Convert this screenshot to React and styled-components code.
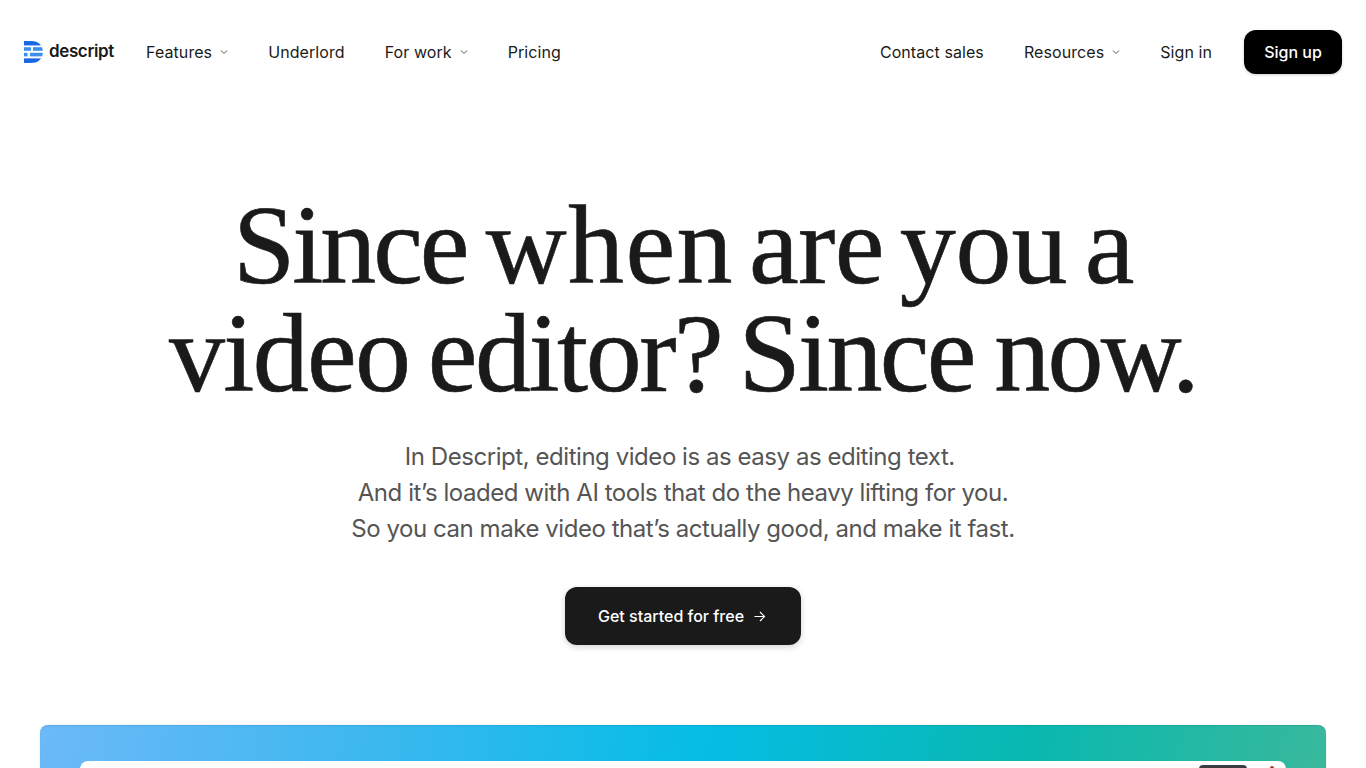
import React from "react";
import styled, { createGlobalStyle } from "styled-components";

const Global = createGlobalStyle`
  html, body { margin: 0; padding: 0; background: #fff; height: 768px; overflow: hidden; }
  * { box-sizing: border-box; }
  body { font-family: Inter, "Liberation Sans", sans-serif; color: #1a1a1a; }
`;

const Page = styled.div`
  width: 1366px;
  height: 768px;
  overflow: hidden;
  display: flex;
  flex-direction: column;
`;

const Nav = styled.nav`
  height: 104px;
  padding: 30px 24px;
  display: flex;
  align-items: center;
  justify-content: space-between;
  flex: none;
`;

const NavGroup = styled.div`
  display: flex;
  align-items: center;
  gap: 40px;
`;

const LogoWrap = styled.a`
  display: flex;
  align-items: center;
  gap: 6px;
  margin-right: -8px;
  width: 90px;
`;

const LogoText = styled.span`
  font-size: 17px;
  font-weight: 600;
  letter-spacing: -0.35px;
  color: #1a1a1a;
  line-height: 20px;
  position: relative;
  top: -1px;
`;

const NavLink = styled.a`
  display: flex;
  align-items: center;
  font-size: 16px;
  font-weight: 400;
  line-height: 24px;
  letter-spacing: 0.08px;
  color: #1a1a1a;
  white-space: nowrap;
`;

const Chevron = styled.svg`
  width: 8px;
  height: 8px;
  margin-left: 8px;
  fill: none;
  stroke: #555;
  stroke-width: 1;
`;

const SignUp = styled.a`
  display: flex;
  align-items: center;
  justify-content: center;
  width: 98px;
  height: 44px;
  margin-left: -8px;
  background: #000;
  color: #fff;
  border-radius: 12px;
  font-size: 16px;
  font-weight: 500;
  box-shadow: 0 1px 3px rgba(0, 0, 0, 0.2);
`;

const Hero = styled.section`
  display: flex;
  flex-direction: column;
  align-items: center;
  padding-top: 87px;
  flex: none;
`;

const Title = styled.h1`
  margin: 0;
  font-family: "Liberation Serif", serif;
  font-weight: 400;
  font-size: 112px;
  line-height: 108px;
  color: #1a1a1a;
  text-align: center;
  white-space: nowrap;
  -webkit-text-stroke: 0.6px #1a1a1a;
`;

const TitleLine = styled.span`
  display: block;
  letter-spacing: ${(p) => p.$spacing}px;
  word-spacing: ${(p) => p.$words}px;
`;

const TitleWord = styled.span`
  letter-spacing: ${(p) => p.$spacing}px;
  margin-right: ${(p) => p.$shift || 0}px;
`;

const Sub = styled.p`
  margin: 32px 0 0;
  font-size: 24px;
  line-height: 36px;
  font-weight: 400;
  letter-spacing: -0.45px;
  color: #555;
  text-align: center;
`;

const Cta = styled.a`
  margin-top: 40px;
  width: 236px;
  height: 58px;
  display: flex;
  align-items: center;
  justify-content: center;
  gap: 9px;
  background: #1a1a1a;
  color: #fff;
  border-radius: 12px;
  font-size: 16px;
  font-weight: 500;
  box-shadow: 0 2px 6px rgba(0, 0, 0, 0.18);
`;

const Arrow = styled.svg`
  width: 13px;
  height: 13px;
  margin-right: 2px;
  fill: none;
  stroke: #fff;
  stroke-width: 1.2;
`;

const Stage = styled.div`
  margin: 80px 40px 0;
  flex: none;
  height: 200px;
  padding: 36px 40px 0;
  border-radius: 8px;
  background: linear-gradient(100deg, #6cb9f8 0%, #3db8ef 25%, #05bde6 50%, #08b8b0 75%, #3db99a 100%);
  box-shadow: inset 0 1px 1px rgba(0, 60, 80, 0.12), 0 0 2px rgba(0, 0, 0, 0.12);
`;

const AppFrame = styled.div`
  height: 100%;
  background: #fff;
  border-radius: 8px 8px 0 0;
  display: flex;
  justify-content: flex-end;
  padding: 4px 12px 0 0;
  gap: 23px;
`;

const DarkPill = styled.div`
  width: 48px;
  height: 10px;
  background: #3a3d42;
  border-radius: 4px;
`;

const RedDot = styled.div`
  width: 4px;
  height: 4px;
  margin-top: 1px;
  background: #a33;
  border-radius: 50%;
`;

const Logo = () => (
  <svg width="19" height="22" viewBox="0 0 19 22">
    <defs>
      <clipPath id="d-shape">
        <path d="M0 0h7.5C14.5 0 19 4.6 19 11s-4.5 11-11.5 11H0z" />
      </clipPath>
    </defs>
    <g clipPath="url(#d-shape)">
      <rect x="0" y="0" width="19" height="4.4" fill="#1668e3" />
      <rect x="0" y="6.2" width="7" height="3.6" fill="#3b8eea" />
      <rect x="9" y="6.2" width="10" height="3.6" fill="#3b8eea" />
      <rect x="0" y="11.8" width="3.5" height="3.6" fill="#3b8eea" />
      <rect x="6" y="11.8" width="13" height="3.6" fill="#3b8eea" />
      <rect x="0" y="17.4" width="19" height="4.6" fill="#1668e3" />
    </g>
  </svg>
);

const Down = () => (
  <Chevron viewBox="0 0 8 8">
    <path d="M1 2.5 4 5.5 7 2.5" />
  </Chevron>
);

export default function App() {
  return (
    <Page>
      <Global />
      <Nav>
        <NavGroup>
          <LogoWrap>
            <Logo />
            <LogoText>descript</LogoText>
          </LogoWrap>
          <NavLink>Features<Down /></NavLink>
          <NavLink>Underlord</NavLink>
          <NavLink>For work<Down /></NavLink>
          <NavLink>Pricing</NavLink>
        </NavGroup>
        <NavGroup>
          <NavLink>Contact sales</NavLink>
          <NavLink>Resources<Down /></NavLink>
          <NavLink>Sign in</NavLink>
          <SignUp>Sign up</SignUp>
        </NavGroup>
      </Nav>
      <Hero>
        <Title>
          <TitleLine $spacing={-1.6} $words={-6.5}>
            <TitleWord $spacing={-3.1} $shift={-0.5}>Since</TitleWord>{" "}
            <TitleWord $spacing={1.4} $shift={-5}>when</TitleWord>{" "}
            <TitleWord $spacing={-0.6} $shift={-4}>are</TitleWord>{" "}
            <TitleWord $spacing={-0.1} $shift={-2.5}>you</TitleWord>{" "}
            <TitleWord $spacing={-1.6}>a</TitleWord>
          </TitleLine>
          <TitleLine $spacing={-2.7} $words={-6}>
            <TitleWord $spacing={-1.7} $shift={-1}>video</TitleWord>{" "}
            <TitleWord $spacing={-2.5} $shift={-2}>editor?</TitleWord>{" "}
            <TitleWord $spacing={-2.7} $shift={1}>Since</TitleWord>{" "}
            <TitleWord $spacing={-2.7}>now.</TitleWord>
          </TitleLine>
        </Title>
        <Sub>
          In Descript, editing video is as easy as editing text.{"\u00a0"}
          <br />
          And it’s loaded with AI tools that do the heavy lifting for you.
          <br />
          So you can make video that’s actually good, and make it fast.
        </Sub>
        <Cta>
          Get started for free
          <Arrow viewBox="0 0 13 13">
            <path d="M1.5 6.5h10M7 2l4.5 4.5L7 11" />
          </Arrow>
        </Cta>
      </Hero>
      <Stage>
        <AppFrame>
          <DarkPill />
          <RedDot />
        </AppFrame>
      </Stage>
    </Page>
  );
}
